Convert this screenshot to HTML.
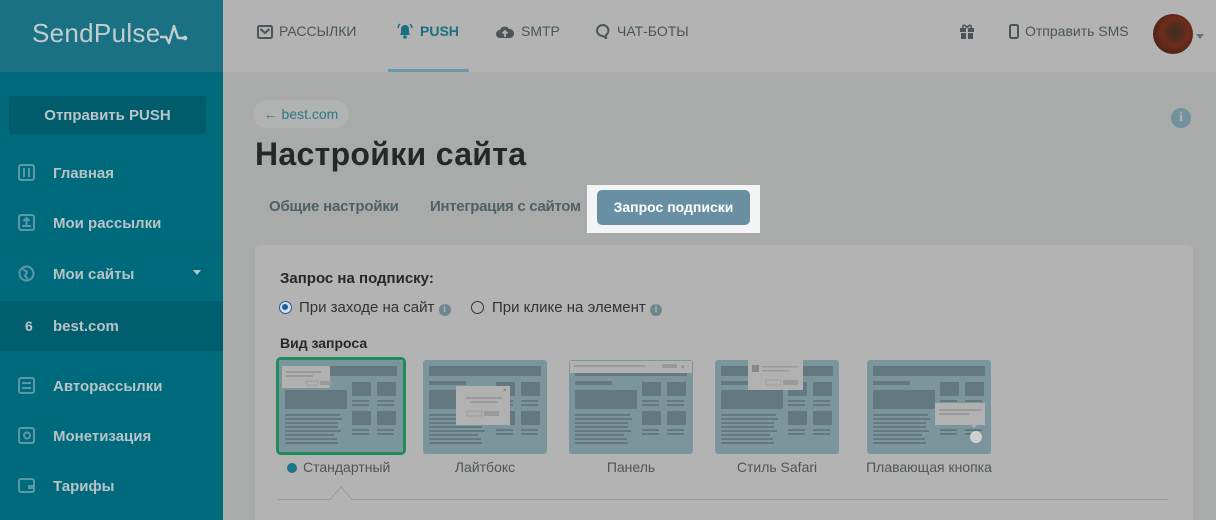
<!DOCTYPE html>
<html><head><meta charset="utf-8"><style>
*{box-sizing:border-box;margin:0;padding:0}
html,body{width:1216px;height:520px;overflow:hidden}
body{background:#a9abaa;font-family:"Liberation Sans",sans-serif;position:relative}
.abs{position:absolute}
.sb{left:0;top:0;width:223px;height:520px;background:#006a7d}
.sbh{left:0;top:0;width:223px;height:72px;background:#1b7184}
.logo{left:32px;top:18px;font-size:26px;color:#c3cdcf;letter-spacing:.3px}
.pushbtn{left:9px;top:96px;width:197px;height:38px;background:#005b6b;border-radius:3px;color:#b9c5c7;font-weight:bold;font-size:15px;text-align:center;line-height:40px}
.mi{left:0;width:223px;height:50px;color:#b8c3c5;font-weight:bold;font-size:15px;line-height:52px;padding-left:53px}
.mi svg{position:absolute;left:18px;top:16px}
.hdr{left:223px;top:0;width:993px;height:72px;background:#b3b3b3}
.nav{top:21px;font-size:14px;color:#4a5558;height:20px;line-height:20px}
.nav svg{vertical-align:-3px;margin-right:6px}
.card{left:255px;top:245px;width:938px;height:275px;background:#b3b3b3;border-radius:5px 5px 0 0}
.thumb{top:358px}
.lbl{top:459px;font-size:14px;color:#4f5556;text-align:center;width:146px}
</style></head><body>
<div class="abs sb"></div>
<div class="abs sbh"></div>
<div class="abs logo">SendPulse<svg width="28" height="22" viewBox="0 0 28 22" style="vertical-align:-3px"><path d="M0 14h6l3 6 5-17 4 12h6" fill="none" stroke="#c3cdcf" stroke-width="2.4" stroke-linejoin="round"/><circle cx="25" cy="15" r="2.3" fill="#c3cdcf"/></svg></div>
<div class="abs pushbtn">Отправить PUSH</div>
<div class="abs mi" style="top:148px"><svg width="17" height="17"><rect x="1" y="1" width="15" height="15" rx="2" fill="none" stroke="#5c98a4" stroke-width="2"/><path d="M6 4v9M11 4v9" stroke="#5c98a4" stroke-width="2"/></svg>Главная</div>
<div class="abs mi" style="top:198px"><svg width="17" height="17"><rect x="1" y="1" width="15" height="15" rx="2" fill="none" stroke="#5c98a4" stroke-width="2"/><path d="M8.5 11V4M5.5 7l3-3 3 3M4 12h9" stroke="#5c98a4" stroke-width="2" fill="none"/></svg>Мои рассылки</div>
<div class="abs" style="left:0;top:249px;width:223px;height:1px;background:#0f6373"></div>
<div class="abs mi" style="top:249px"><svg width="17" height="17"><circle cx="8.5" cy="8.5" r="7" fill="none" stroke="#5c98a4" stroke-width="2"/><path d="M5 4l4 3-2 4 3 3" stroke="#5c98a4" stroke-width="2" fill="none"/></svg>Мои сайты<span style="position:absolute;left:193px;top:21px;border:4px solid transparent;border-top:5px solid #b8c3c5;height:0;width:0"></span></div>
<div class="abs" style="left:0;top:301px;width:223px;height:50px;background:#005e6e"></div>
<div class="abs mi" style="top:301px">best.com</div>
<div class="abs" style="left:25px;top:318px;font-size:14px;color:#b8c3c5;font-weight:bold">6</div>
<div class="abs mi" style="top:361px"><svg width="17" height="17"><rect x="1" y="1" width="15" height="15" rx="2" fill="none" stroke="#5c98a4" stroke-width="2"/><path d="M4 6h9M4 11h9" stroke="#5c98a4" stroke-width="2"/></svg>Авторассылки</div>
<div class="abs mi" style="top:411px"><svg width="17" height="17"><rect x="1" y="1" width="15" height="15" rx="2" fill="none" stroke="#5c98a4" stroke-width="2"/><circle cx="9" cy="8.5" r="3" fill="none" stroke="#5c98a4" stroke-width="2"/></svg>Монетизация</div>
<div class="abs mi" style="top:461px"><svg width="17" height="17"><rect x="1" y="2" width="15" height="13" rx="2" fill="none" stroke="#5c98a4" stroke-width="2"/><path d="M10 8h6v4h-6z" fill="#5c98a4"/></svg>Тарифы</div>

<div class="abs hdr"></div>
<div class="abs nav" style="left:257px"><svg width="16" height="14"><rect x="1" y="1" width="14" height="12" rx="1.5" fill="none" stroke="#4a5558" stroke-width="2"/><path d="M3.5 4l4.5 4 4.5-4" stroke="#4a5558" stroke-width="2" fill="none"/></svg>РАССЫЛКИ</div>
<div class="abs nav" style="left:396px;color:#1a6f80;font-weight:bold"><svg width="18" height="17"><path d="M4 13c1-1 1-3 1-6a4 4 0 018 0c0 3 0 5 1 6z" fill="#1a6f80"/><circle cx="9" cy="15" r="1.8" fill="#1a6f80"/><path d="M2 6a6 6 0 012-4M16 6a6 6 0 00-2-4" stroke="#1a6f80" stroke-width="1.5" fill="none"/></svg>PUSH</div>
<div class="abs" style="left:388px;top:69px;width:81px;height:3px;background:#6a9aa7"></div>
<div class="abs nav" style="left:495px"><svg width="20" height="15"><path d="M5 14a4 4 0 010-8 5 5 0 019-1 4 4 0 011 9z" fill="#4a5558"/><path d="M10 13V7M7.5 9.5l2.5-2.5 2.5 2.5" stroke="#b3b3b3" stroke-width="1.8" fill="none"/></svg>SMTP</div>
<div class="abs nav" style="left:595px"><svg width="16" height="16"><path d="M8 2a6 5.5 0 100 11l3 2v-3a5.5 5.5 0 00-3-10z" fill="none" stroke="#4a5558" stroke-width="2"/></svg>ЧАТ-БОТЫ</div>
<svg class="abs" style="left:959px;top:23px" width="16" height="16"><rect x="1" y="5" width="14" height="4" fill="#4a5558"/><rect x="2" y="10" width="12" height="6" fill="#4a5558"/><path d="M8 4v12" stroke="#b3b3b3" stroke-width="2"/><path d="M8 5C6 1 3 2 4 5M8 5c2-4 5-3 4 0" stroke="#4a5558" stroke-width="1.6" fill="none"/></svg>
<div class="abs nav" style="left:1009px;font-size:14px"><svg width="10" height="15"><rect x="1" y="1" width="8" height="13" rx="1.5" fill="none" stroke="#4a5558" stroke-width="2"/></svg>Отправить SMS</div>
<div class="abs" style="left:1153px;top:14px;width:40px;height:40px;border-radius:50%;background:radial-gradient(circle at 55% 45%,#3a2a24 0%,#6e2c1a 45%,#2a1a14 100%)"></div>
<div class="abs" style="left:1196px;top:34px;border:4px solid transparent;border-top:5px solid #5c7680;width:0;height:0"></div>

<div class="abs" style="left:253px;top:100px;width:96px;height:28px;border-radius:14px;background:#b1b3b2;color:#2a7886;font-size:14px;line-height:28px;text-align:center">← best.com</div>
<div class="abs" style="left:1171px;top:108px;width:20px;height:20px;border-radius:50%;background:#74919e;color:#b3b3b3;font-weight:bold;font-size:14px;text-align:center;line-height:20px;font-family:'Liberation Serif',serif">i</div>
<div class="abs" style="left:255px;top:136px;font-size:32px;color:#262828;font-weight:bold;letter-spacing:.3px">Настройки сайта</div>
<div class="abs" style="left:269px;top:198px;font-size:15px;font-weight:bold;color:#4e6166;letter-spacing:-.2px">Общие настройки</div>
<div class="abs" style="left:430px;top:198px;font-size:15px;font-weight:bold;color:#4e6166;letter-spacing:-.3px">Интеграция с сайтом</div>
<div class="abs" style="left:587px;top:185px;width:173px;height:48px;background:#f2f4f5"></div>
<div class="abs" style="left:597px;top:190px;width:153px;height:35px;background:#6990a2;border-radius:5px;color:#fff;font-weight:bold;font-size:14px;text-align:center;line-height:35px">Запрос подписки</div>

<div class="abs card"></div>
<div class="abs" style="left:280px;top:270px;font-size:15px;font-weight:bold;color:#262828">Запрос на подписку:</div>
<div class="abs" style="left:279px;top:301px;width:13px;height:13px;border-radius:50%;border:1.5px solid #1a5fa6;background:#d8dcdc"><div style="margin:2px;width:6px;height:6px;border-radius:50%;background:#1a5fa6"></div></div>
<div class="abs" style="left:299px;top:299px;font-size:15px;color:#303435">При заходе на сайт <span style="display:inline-block;width:12px;height:12px;border-radius:50%;background:#6d8791;color:#b3b3b3;font-size:10px;text-align:center;line-height:12px;font-weight:bold;vertical-align:0">i</span></div>
<div class="abs" style="left:471px;top:301px;width:13px;height:13px;border-radius:50%;border:1.5px solid #333"></div>
<div class="abs" style="left:492px;top:299px;font-size:15px;color:#303435">При клике на элемент <span style="display:inline-block;width:12px;height:12px;border-radius:50%;background:#6d8791;color:#b3b3b3;font-size:10px;text-align:center;line-height:12px;font-weight:bold">i</span></div>
<div class="abs" style="left:280px;top:335px;font-size:14px;font-weight:bold;color:#262828">Вид запроса</div>

<svg width="0" height="0" style="position:absolute"><defs><symbol id="base" viewBox="0 0 124 94">
<rect width="124" height="94" rx="3" fill="#7a959b"/>
<g fill="#64797f"><rect x="6" y="6" width="112" height="10"/><rect x="6" y="21" width="37" height="4"/><rect x="6" y="30" width="62" height="19"/>
<rect x="73" y="22" width="19" height="14"/><rect x="98" y="22" width="19" height="14"/><rect x="73" y="51" width="19" height="14"/><rect x="98" y="51" width="19" height="14"/>
<rect x="73" y="40" width="17" height="2"/><rect x="73" y="44" width="17" height="2"/><rect x="98" y="40" width="17" height="2"/><rect x="98" y="44" width="17" height="2"/>
<rect x="73" y="69" width="17" height="2"/><rect x="73" y="73" width="17" height="2"/><rect x="98" y="69" width="17" height="2"/><rect x="98" y="73" width="17" height="2"/>
<rect x="6" y="54" width="55" height="2"/><rect x="6" y="58" width="57" height="2"/><rect x="6" y="62" width="53" height="2"/><rect x="6" y="66" width="53" height="2"/><rect x="6" y="70" width="56" height="2"/><rect x="6" y="74" width="49" height="2"/><rect x="6" y="78" width="52" height="2"/><rect x="6" y="82" width="53" height="2"/></g>
</symbol></defs></svg>

<div class="abs" style="left:276px;top:357px;width:130px;height:98px;border:3px solid #1f8a5b;border-radius:5px"></div>
<svg class="abs thumb" style="left:279px;top:360px" width="124" height="92"><use href="#base" width="124" height="94"/><rect x="3" y="6" width="48" height="22" rx="1" fill="#b1b1b1"/><rect x="7" y="11" width="35" height="2" fill="#999"/><rect x="7" y="15" width="27" height="2" fill="#999"/><rect x="27" y="21" width="12" height="4" fill="none" stroke="#999" stroke-width=".8"/><rect x="41" y="21" width="12" height="4" fill="#999"/></svg>
<svg class="abs thumb" style="left:423px;top:360px" width="124" height="94"><use href="#base" width="124" height="94"/><rect x="33" y="26" width="54" height="39" fill="#b1b1b1"/><rect x="43" y="37" width="36" height="2" fill="#999"/><rect x="47" y="41" width="28" height="2" fill="#999"/><rect x="44" y="51" width="15" height="5" fill="none" stroke="#999" stroke-width=".8"/><rect x="61" y="51" width="15" height="5" fill="#999"/><text x="80" y="32" font-size="6" fill="#666">×</text></svg>
<svg class="abs thumb" style="left:569px;top:360px" width="124" height="94"><use href="#base" width="124" height="94"/><rect x="1" y="1" width="122" height="12" fill="#b1b1b1"/><rect x="5" y="5" width="71" height="2" fill="#999"/><rect x="93" y="4" width="15" height="4" fill="#999"/><text x="112" y="9" font-size="6" fill="#666">×</text></svg>
<svg class="abs thumb" style="left:715px;top:360px" width="124" height="94"><use href="#base" width="124" height="94"/><rect x="33" y="0" width="55" height="30" fill="#b1b1b1"/><rect x="37" y="5" width="7" height="7" fill="#888"/><rect x="47" y="6" width="35" height="1.5" fill="#999"/><rect x="47" y="10" width="27" height="1.5" fill="#999"/><rect x="51" y="20" width="15" height="5" fill="none" stroke="#999" stroke-width=".8"/><rect x="68" y="20" width="15" height="5" fill="#999"/></svg>
<svg class="abs thumb" style="left:867px;top:360px" width="124" height="94"><use href="#base" width="124" height="94"/><rect x="68" y="43" width="50" height="22" fill="#b1b1b1"/><path d="M104 65l3 3 3-3z" fill="#b1b1b1"/><rect x="72" y="49" width="42" height="2" fill="#999"/><rect x="72" y="53" width="30" height="2" fill="#999"/><circle cx="109" cy="77" r="6" fill="#d0d0d0"/></svg>

<div class="abs" style="left:287px;top:463px;width:10px;height:10px;border-radius:50%;background:#1a7787"></div>
<div class="abs" style="left:303px;top:459px;font-size:14px;color:#4f5556">Стандартный</div>
<div class="abs lbl" style="left:412px">Лайтбокс</div>
<div class="abs lbl" style="left:558px">Панель</div>
<div class="abs lbl" style="left:704px">Стиль Safari</div>
<div class="abs lbl" style="left:856px">Плавающая кнопка</div>
<svg class="abs" style="left:278px;top:484px" width="892" height="20"><path d="M0 15.5H52L63 3l11 12.5H890" fill="none" stroke="#959c9c" stroke-width="1"/></svg>
</body></html>
